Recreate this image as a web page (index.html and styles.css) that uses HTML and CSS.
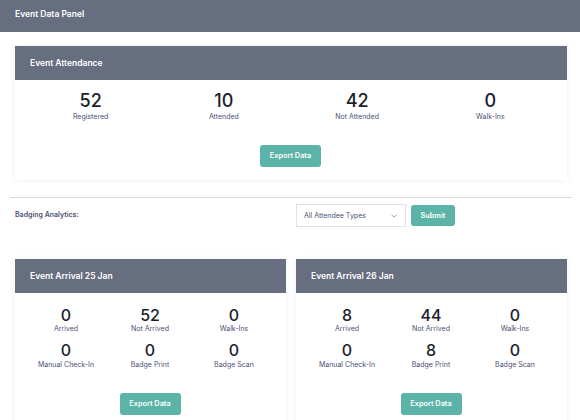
FILE: index.html
```html
<!DOCTYPE html>
<html>
<head>
<meta charset="utf-8">
<link rel="stylesheet" href="styles.css">
</head>
<body>
<div class="topbar"><span class="topbar-title">Event Data Panel</span></div>
<div class="content">
  <div class="card">
    <div class="card-header">Event Attendance</div>
    <div class="card-body attendance">
      <div class="stats stats-4">
        <div class="stat"><div class="num big">52</div><div class="lbl">Registered</div></div>
        <div class="stat"><div class="num big">10</div><div class="lbl">Attended</div></div>
        <div class="stat"><div class="num big">42</div><div class="lbl">Not Attended</div></div>
        <div class="stat"><div class="num big">0</div><div class="lbl">Walk-Ins</div></div>
      </div>
      <div class="actions"><button class="btn">Export Data</button></div>
    </div>
  </div>

  <hr class="sep">

  <div class="two-col filter-row">
    <div class="filter-label">Badging Analytics:</div>
    <div class="filter-controls">
      <div class="select"><span>All Attendee Types</span>
        <svg class="chev" width="6" height="4" viewBox="0 0 6 4"><polyline points="0.5,0.7 3,3.2 5.5,0.7" fill="none" stroke="#8a8ea0" stroke-width="0.9"/></svg>
      </div>
      <button class="btn btn-submit">Submit</button>
    </div>
  </div>

  <div class="two-col arrivals">
    <div class="card">
      <div class="card-header">Event Arrival 25 Jan</div>
      <div class="card-body arrival">
        <div class="stats stats-3">
          <div class="stat"><div class="num">0</div><div class="lbl">Arrived</div></div>
          <div class="stat"><div class="num">52</div><div class="lbl">Not Arrived</div></div>
          <div class="stat"><div class="num">0</div><div class="lbl">Walk-Ins</div></div>
          <div class="stat"><div class="num">0</div><div class="lbl">Manual Check-In</div></div>
          <div class="stat"><div class="num">0</div><div class="lbl">Badge Print</div></div>
          <div class="stat"><div class="num">0</div><div class="lbl">Badge Scan</div></div>
        </div>
        <div class="actions"><button class="btn">Export Data</button></div>
      </div>
    </div>
    <div class="card">
      <div class="card-header">Event Arrival 26 Jan</div>
      <div class="card-body arrival">
        <div class="stats stats-3">
          <div class="stat"><div class="num">8</div><div class="lbl">Arrived</div></div>
          <div class="stat"><div class="num">44</div><div class="lbl">Not Arrived</div></div>
          <div class="stat"><div class="num">0</div><div class="lbl">Walk-Ins</div></div>
          <div class="stat"><div class="num">0</div><div class="lbl">Manual Check-In</div></div>
          <div class="stat"><div class="num">8</div><div class="lbl">Badge Print</div></div>
          <div class="stat"><div class="num">0</div><div class="lbl">Badge Scan</div></div>
        </div>
        <div class="actions"><button class="btn">Export Data</button></div>
      </div>
    </div>
  </div>
</div>
</body>
</html>
```

FILE: styles.css
```css
* { box-sizing: border-box; }
html, body { margin: 0; padding: 0; background: #ffffff; }
body {
  font-family: Inter, "Noto Sans", "Liberation Sans", sans-serif;
  color: #1b1e2e;
  overflow: hidden;
}
.topbar {
  height: 32px;
  background: #676e80;
  padding: 9px 15px 0;
}
.topbar-title {
  color: #ffffff;
  font-weight: 600;
  font-size: 8.5px;
  line-height: 10px;
  display: block;
}
.content {
  padding: 14px 13px 0 15px;
}
.card {
  background: #ffffff;
  box-shadow: 0 0 6px rgba(0, 0, 0, 0.07);
}
.card-header {
  height: 34px;
  background: #676e80;
  color: #ffffff;
  font-weight: 600;
  font-size: 8.5px;
  line-height: 34px;
  padding-left: 15px;
}
.card-body {
  padding: 12px 10px 13px 9px;
}
.card-body.arrival {
  padding-top: 14px;
}
.stats {
  display: grid;
}
.stats-4 { grid-template-columns: repeat(4, 1fr); }
.stats-3 { grid-template-columns: repeat(3, 1fr); row-gap: 9px; }
.stat { text-align: center; }
.num {
  font-size: 16px;
  line-height: 16px;
  font-weight: 500;
  color: #1b1e2e;
}
.num.big {
  font-size: 18px;
  line-height: 18px;
}
.lbl {
  font-size: 7px;
  line-height: 9px;
  margin-top: 1.6px;
  color: #4b4f72;
}
.num.big + .lbl {
  margin-top: 1.8px;
}
.actions {
  display: flex;
  justify-content: center;
  margin-top: 24px;
}
.btn {
  background: #5cb4a8;
  color: #ffffff;
  border: none;
  border-radius: 3px;
  font-family: inherit;
  font-weight: 600;
  font-size: 7.3px;
  width: 61px;
  height: 22px;
  padding: 0;
}
.sep {
  border: none;
  border-top: 1px solid #dadada;
  margin: 17px -5px 0 -5px;
  height: 0;
}
.two-col {
  display: grid;
  grid-template-columns: 1fr 1fr;
  column-gap: 10px;
}
.filter-row {
  margin-top: 6px;
}
.filter-label {
  font-size: 7px;
  font-weight: 600;
  color: #4b4f72;
  padding-top: 6px;
}
.filter-controls {
  display: flex;
  align-items: flex-start;
  gap: 5px;
}
.select {
  width: 110px;
  height: 23px;
  border: 1px solid #dfe0ea;
  display: flex;
  align-items: center;
  justify-content: space-between;
  padding: 0 8px 0 7px;
  font-size: 7px;
  color: #4b4f72;
}
.chev { margin-top: 1px; }
.btn-submit {
  width: 44px;
  height: 21px;
  margin-top: 1px;
}
.arrivals {
  margin-top: 32px;
}
```
